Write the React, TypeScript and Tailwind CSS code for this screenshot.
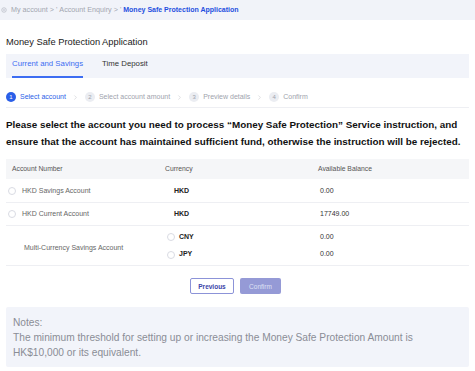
import { ChevronRight } from "lucide-react";

const steps = ["Select account", "Select account amount", "Preview details", "Confirm"];

function Radio() {
  return <span className="inline-block h-[8px] w-[8px] shrink-0 rounded-full border border-[#d9dbe3] bg-white" />;
}

export default function App() {
  return (
    <div className="min-h-[371px] w-[475px] bg-white font-['Liberation_Sans',Arial,sans-serif] text-[#222]">
      <div className="flex h-[20px] items-center gap-[2px] bg-[#f1f3f9] pl-[1px] text-[7.2px] text-[#a3a6b0]">
        <svg width="6" height="6" viewBox="0 0 12 12" className="mr-[2px]">
          <circle cx="6" cy="6" r="4.5" fill="none" stroke="#b5b8c2" strokeWidth="1.4" />
          <circle cx="6" cy="6" r="1.6" fill="#b5b8c2" />
        </svg>
        <span>My account</span>
        <span>&gt; '</span>
        <span>Account Enquiry</span>
        <span>&gt; '</span>
        <span className="text-[7px] font-bold text-[#1f4fe0]">Money Safe Protection Application</span>
      </div>

      <div className="px-[6px]">
        <div className="pt-[16px] text-[9.3px] text-[#1a1a1a]">Money Safe Protection Application</div>

        <div className="mt-[4px] flex h-[24px] items-end gap-[19px] bg-[#f2f4fa] px-[6px]">
          <div className="border-b-[2px] border-[#3d6df2] pb-[6px] text-[7.8px] text-[#3d6df2]">Current and Savings</div>
          <div className="pb-[8px] text-[7.8px] text-[#333]">Time Deposit</div>
        </div>

        <div className="mt-[14px] flex items-center border-b border-[#eeeff3] pb-[5px] text-[7px] text-[#a0a3ad]">
          {steps.map((s, i) => (
            <div key={s} className="flex items-center">
              <span
                className={`flex h-[10px] w-[10px] items-center justify-center rounded-full text-[6px] ${
                  i === 0 ? "bg-[#2b5fe8] text-white" : "bg-[#ebedf2] text-[#a0a3ad]"
                }`}
              >
                {i + 1}
              </span>
              <span className={`ml-[4px] ${i === 0 ? "text-[#2b5fe8]" : ""}`}>{s}</span>
              {i < steps.length - 1 && <ChevronRight size={7} className="mx-[6px] text-[#b8bac2]" strokeWidth={1.5} />}
            </div>
          ))}
        </div>

        <p className="mt-[8px] text-[9.85px] font-bold leading-[17px] text-[#111]">
          Please select the account you need to process “Money Safe Protection” Service instruction, and ensure that the account has maintained sufficient fund, otherwise the instruction will be rejected.
        </p>

        <div className="mt-[9px] text-[7px]">
          <div className="grid h-[20px] grid-cols-[153px_153px_1fr] items-center bg-[#f5f6f8] px-[6px] text-[6.8px] text-[#555]">
            <span>Account Number</span>
            <span>Currency</span>
            <span>Available Balance</span>
          </div>
          <div className="grid h-[24px] grid-cols-[159px_153px_1fr] items-center border-b border-[#eeeff3] px-[2px]">
            <div className="flex items-center gap-[6px] text-[#666]">
              <Radio />
              HKD Savings Account
            </div>
            <span className="pl-[7px] font-bold text-[#222]">HKD</span>
            <span className="text-[#333]">0.00</span>
          </div>
          <div className="grid h-[23px] grid-cols-[159px_153px_1fr] items-center border-b border-[#eeeff3] px-[2px]">
            <div className="flex items-center gap-[6px] text-[#666]">
              <Radio />
              HKD Current Account
            </div>
            <span className="pl-[7px] font-bold text-[#222]">HKD</span>
            <span className="text-[#333]">17749.00</span>
          </div>
          <div className="grid h-[40px] grid-cols-[159px_153px_1fr] items-center border-b border-[#eeeff3] px-[2px]">
            <div className="pl-[16px] pt-[4px] text-[#666]">Multi-Currency Savings Account</div>
            <div className="flex flex-col gap-[7px] font-bold text-[#222]">
              <div className="flex items-center gap-[4px]">
                <Radio />
                CNY
              </div>
              <div className="flex items-center gap-[4px]">
                <Radio />
                JPY
              </div>
            </div>
            <div className="flex flex-col gap-[7px] text-[#333]">
              <span>0.00</span>
              <span>0.00</span>
            </div>
          </div>
        </div>

        <div className="mt-[12px] flex justify-center gap-[6px] pr-[4px] text-[6.5px]">
          <button className="h-[16px] w-[44px] rounded-[2px] border border-[#8c93d8] bg-white font-bold text-[#3a44a8]">Previous</button>
          <button className="h-[16px] w-[41px] rounded-[2px] bg-[#959ad6] text-[#dfe1f5]">Confirm</button>
        </div>

        <div className="mt-[13px] rounded-[2px] bg-[#f2f4fa] px-[7px] pb-[7px] pt-[8px] text-[10.2px] leading-[15px] text-[#8a8d96]">
          <div>Notes:</div>
          <div>The minimum threshold for setting up or increasing the Money Safe Protection Amount is HK$10,000 or its equivalent.</div>
        </div>
      </div>
    </div>
  );
}
